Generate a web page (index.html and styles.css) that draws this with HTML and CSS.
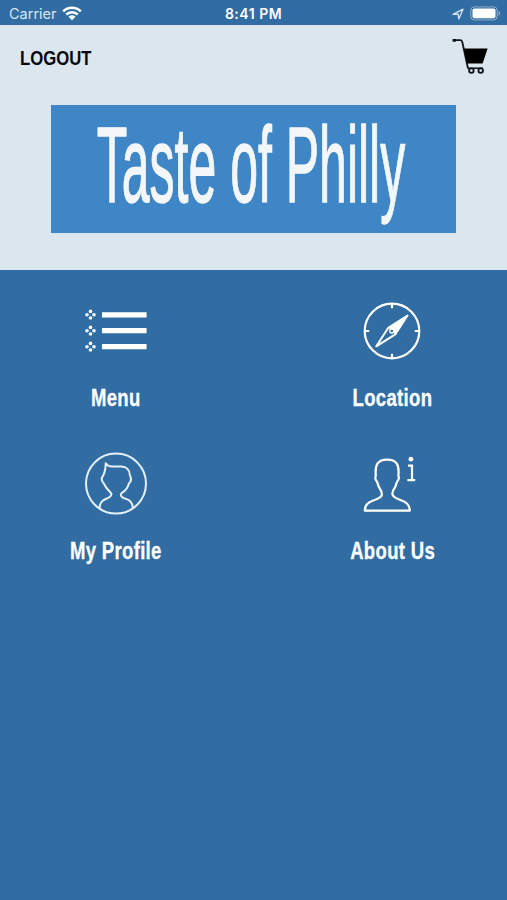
FILE: index.html
```html
<!DOCTYPE html>
<html lang="en">
<head>
    <meta charset="UTF-8">
    <meta name="viewport" content="width=device-width, initial-scale=1.0">
    <title>Taste of Philly</title>
    <link rel="stylesheet" href="styles.css">
</head>
<body>
    <div class="status-bar">
        <div class="status-left">
            <span class="carrier">Carrier</span>
            <svg class="wifi" width="20" height="15" viewBox="0 0 20 15">
                <path d="M1.2 5.4a12.6 12.6 0 0 1 17.6 0M4.3 8.5a8.2 8.2 0 0 1 11.4 0" fill="none" stroke="#fff" stroke-width="2.5"/>
                <path d="M6.5 10.7a5 5 0 0 1 7 0L10 14.2z" fill="#fff"/>
            </svg>
        </div>
        <span class="time">8:41 PM</span>
        <div class="status-right">
            <svg width="12" height="12" viewBox="0 0 12 12">
                <path d="M1 6.3L11 1.2 6.8 11 6.2 6.2z" fill="none" stroke="#d8e6f3" stroke-width="1.3" stroke-linejoin="round"/>
            </svg>
            <svg width="31" height="15" viewBox="0 0 31 15">
                <rect x=".8" y=".9" width="26.4" height="13" rx="3.6" fill="none" stroke="#91b1d0" stroke-width="1"/>
                <rect x="2.5" y="2.6" width="23" height="9.6" rx="2" fill="#fff"/>
                <path d="M28.6 5.1c2 .9 2 3.8 0 4.7z" fill="#91b1d0"/>
            </svg>
        </div>
    </div>

    <div class="header">
        <div class="header-top">
            <button class="logout">LOGOUT</button>
            <button class="cart">
                <svg width="36" height="36" viewBox="0 0 36 36">
                    <path d="M1.8 2.2H8q1.8 0 2.3 1.8L15.8 29.5q.3 1 1 1" fill="none" stroke="#10151a" stroke-width="1.8"/>
                    <path d="M.6 1.1h3.2v2.6H.6z"/>
                    <path d="M11.6 10.4H35.6L30.6 25.6H15z"/>
                    <path d="M16 30.2h15" stroke="#10151a" stroke-width="1.5"/>
                    <g fill="#dce6ee" stroke="#10151a" stroke-width="1.8">
                        <circle cx="19.4" cy="32.6" r="2.3"/>
                        <circle cx="28.7" cy="32.6" r="2.3"/>
                    </g>
                </svg>
            </button>
        </div>
        <div class="banner">
            <span class="banner-text">Taste of Philly</span>
        </div>
    </div>

    <div class="menu-grid">
        <div class="item">
            <svg width="64" height="64" viewBox="0 0 64 64">
                <defs>
                    <g id="bullet">
                        <circle cx="0" cy="-3.3" r="1.8"/>
                        <circle cx="3.5" cy="0" r="1.8"/>
                        <circle cx="0" cy="3.3" r="1.8"/>
                        <circle cx="-3.5" cy="0" r="1.8"/>
                    </g>
                </defs>
                <g fill="#fff">
                    <use href="#bullet" x="7.5" y="15.7"/>
                    <use href="#bullet" x="7.5" y="31.7"/>
                    <use href="#bullet" x="7.5" y="47.7"/>
                    <path d="M19 13.2h44.6v5.2H19zM19 29.1h44.6v5.2H19zM19 45.1h44.6v5.2H19z"/>
                </g>
            </svg>
            <span class="label">Menu</span>
        </div>
        <div class="item">
            <svg width="64" height="64" viewBox="0 0 64 64">
                <circle cx="32" cy="32" r="27.3" fill="none" stroke="#fff" stroke-width="2.2"/>
                <path d="M32 5v4.2M32 54.8V59M5 32h4.2M54.8 32H59" stroke="#fff" stroke-width="2.2"/>
                <path d="M47.5 16.5L28.3 28.8 16.3 47.3 35.2 35.4z" fill="none" stroke="#fff" stroke-width="2" stroke-linejoin="round"/>
                <path d="M47.5 16.5L28.3 28.8 32 32 35.2 35.4z" fill="#fff"/>
                <circle cx="31.8" cy="32" r="2" fill="#316ca2" stroke="#fff" stroke-width="1.3"/>
            </svg>
            <span class="label">Location</span>
        </div>
        <div class="item">
            <svg width="64" height="64" viewBox="0 0 64 64">
                <g fill="none" stroke="#e5f1fc" stroke-width="2" stroke-linejoin="round">
                    <circle cx="33" cy="31.6" r="30"/>
                    <path d="M16.5 56.5C16.6 50.5 19 48.5 23.2 46.8 26 45.7 28.3 44.5 28.4 42.3 28.4 40.8 26.5 39.5 24.3 37 21.8 34.2 21.5 32 20.2 30.6 18.4 28.6 18.2 26.4 19.8 24.2 21.3 21.5 22.7 18 22.7 11.2 24.2 13.6 25.8 14.5 29 14.6H38.5C43.5 14.8 46.6 18 46.7 22.6 48.6 26.2 48.5 29.4 45.9 31.6 44.8 35.5 42.8 38.6 39.6 40.4 37.2 42 37.2 43.7 39.5 45.4 41.8 47 45.4 47.1 47.3 49.3 49.4 51.5 49.8 53.8 49.9 56.5"/>
                </g>
            </svg>
            <span class="label">My Profile</span>
        </div>
        <div class="item">
            <svg width="64" height="64" viewBox="0 0 64 64">
                <path d="M4.8 58.7H49.8C50 53 46.6 50 41 48.2 36 46.5 32.4 45 32.3 41.8 32.3 39.7 33.2 37.7 35 35.4 36.1 33.3 36.1 31.2 37.1 29.8 39 27.5 39.4 25.8 38.4 23.7 39.6 12.3 36.2 7.6 27 7.6 18 7.6 14.7 12.5 15.8 23.7 14.8 26 15.3 28 17 29.8 17.9 31.5 18 33.5 19.3 35.6 21.2 38.5 22.2 40.5 21.8 43 21.2 45.6 17.5 47 13.2 48.5 7.8 50.3 4.8 53.3 4.8 58.7z" fill="none" stroke="#fff" stroke-width="2.2" stroke-linejoin="round"/>
                <circle cx="50.9" cy="7.2" r="2.4" fill="#fff"/>
                <path d="M48 13.6h4V28M47.4 28.1H55.2" fill="none" stroke="#fff" stroke-width="2.2"/>
            </svg>
            <span class="label">About Us</span>
        </div>
    </div>
</body>
</html>
```
FILE: styles.css
```css
* {
    box-sizing: border-box;
}

body {
    margin: 0;
    min-height: 100vh;
    font-family: "Liberation Sans", Arial, sans-serif;
    background: #316ca2;
}

button {
    padding: 0;
    border: none;
    background: none;
    font-family: inherit;
    cursor: pointer;
}

.status-bar {
    display: grid;
    grid-template-columns: 1fr auto 1fr;
    align-items: center;
    height: 25px;
    padding: 2px 6px 0 9px;
    font-family: Inter, sans-serif;
    color: #fff;
}

.status-left,
.status-right {
    display: flex;
    align-items: center;
}

.status-left {
    gap: 5px;
}

.status-right {
    justify-content: flex-end;
    gap: 6px;
}

.carrier {
    font-size: 14.5px;
    color: #d8e6f3;
}

.time {
    padding-right: 3px;
    font-size: 14px;
    font-weight: 600;
    letter-spacing: 0.5px;
}

.header {
    height: 245px;
    background: #dce6ee;
}

.header-top {
    display: flex;
    justify-content: space-between;
    height: 80px;
    padding: 13px 19px 0 20px;
}

.logout {
    height: 40px;
    font-size: 20px;
    font-weight: bold;
    color: #05090d;
    transform: scaleX(0.835);
    transform-origin: left;
}

.cart {
    height: 36px;
}

.banner {
    display: flex;
    justify-content: center;
    width: 405px;
    height: 128px;
    margin: 0 auto;
    padding-right: 5px;
    background: #3e86c6;
}

/* tall condensed logo lettering */
.banner-text {
    font-size: 50px;
    line-height: 128px;
    color: #f4f7fa;
    white-space: nowrap;
    -webkit-text-stroke: 0.6px #f4f7fa;
    transform: translateY(-3px) scaleY(2.14);
}

.menu-grid {
    display: grid;
    grid-template-columns: 230px 230px;
    grid-auto-rows: 153px;
    justify-content: space-between;
    padding-top: 29px;
}

.item {
    display: flex;
    flex-direction: column;
    align-items: center;
    gap: 22px;
}

.label {
    padding-left: 1px;
    font-size: 23px;
    line-height: 27px;
    font-weight: bold;
    letter-spacing: 0.4px;
    color: #fff;
    white-space: nowrap;
    -webkit-text-stroke: 0.3px #fff;
    transform: scaleX(0.805);
}
```
